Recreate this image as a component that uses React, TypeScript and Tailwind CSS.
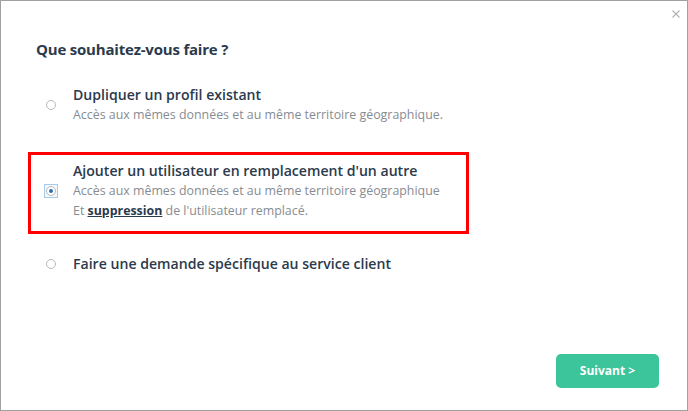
import { useState } from 'react';

const options = [
  {
    id: 'dupliquer',
    titre: 'Dupliquer un profil existant',
    lignes: ['Accès aux mêmes données et au même territoire géographique.'],
    marge: 'mt-[22px]',
  },
  {
    id: 'remplacer',
    titre: "Ajouter un utilisateur en remplacement d'un autre",
    lignes: ['Accès aux mêmes données et au même territoire géographique'],
    suppression: true,
    marge: 'mt-[24px]',
  },
  {
    id: 'specifique',
    titre: 'Faire une demande spécifique au service client',
    lignes: [],
    marge: 'mt-[17px]',
  },
];

function Radio({ checked }: { checked: boolean }) {
  return (
    <span
      className={`-ml-[2px] flex h-[14px] w-[14px] shrink-0 items-center justify-center ${checked ? 'border border-[#a9cbe9] bg-[#f3f8fc]' : ''}`}
    >
      <span className="flex h-[10px] w-[10px] items-center justify-center rounded-full border border-[#b9b9b9] bg-white">
        {checked && <span className="h-[4px] w-[4px] rounded-full bg-[#2f6db3]" />}
      </span>
    </span>
  );
}

export default function App() {
  const [choix, setChoix] = useState('remplacer');

  return (
    <div
      className="relative h-[411px] w-[688px] border border-[#a0a0a0] bg-white text-[#2b3a4c]"
      style={{ fontFamily: '"Open Sans", "Noto Sans", sans-serif' }}
    >
      <button type="button" className="absolute right-[7px] top-[9px] text-[#b3b3b3]">
        <svg width="8" height="8" viewBox="0 0 8 8" fill="none" stroke="currentColor" strokeWidth="1.1">
          <path d="M0.5 0.5 L7.5 7.5 M7.5 0.5 L0.5 7.5" />
        </svg>
      </button>

      <div className="pl-[35px] pt-[37px]">
        <h2 className="text-[15px] font-bold leading-[22px] tracking-[-0.2px]">Que souhaitez-vous faire ?</h2>

        <div className="flex flex-col">
          {options.map((o) => {
            const actif = choix === o.id;
            return (
              <div
                key={o.id}
                onClick={() => setChoix(o.id)}
                className={`${o.marge} -ml-[8px] flex w-[441px] cursor-pointer items-center gap-[17px] border-[3px] pl-[15px] ${actif ? 'border-[#ff0000] pb-[10px] pt-[6px]' : 'border-transparent'}`}
              >
                <Radio checked={actif} />
                <div className="-ml-[2px] flex flex-col">
                  <span className="text-[14.1px] font-semibold leading-[20px]">{o.titre}</span>
                  {o.lignes.map((l) => (
                    <span key={l} className="text-[12.4px] leading-[20px] text-[#878c92]">
                      {l}
                    </span>
                  ))}
                  {o.suppression && (
                    <span className="text-[12.4px] leading-[20px] text-[#878c92]">
                      Et <span className="font-bold text-[#2b3a4c] underline">suppression</span> de l'utilisateur remplacé.
                    </span>
                  )}
                </div>
              </div>
            );
          })}
        </div>
      </div>

      <button
        type="button"
        className="absolute bottom-[22px] right-[28px] h-[34px] w-[103px] rounded-[5px] bg-[#3cc49a] text-[12px] font-bold text-white"
      >
        Suivant &gt;
      </button>
    </div>
  );
}
